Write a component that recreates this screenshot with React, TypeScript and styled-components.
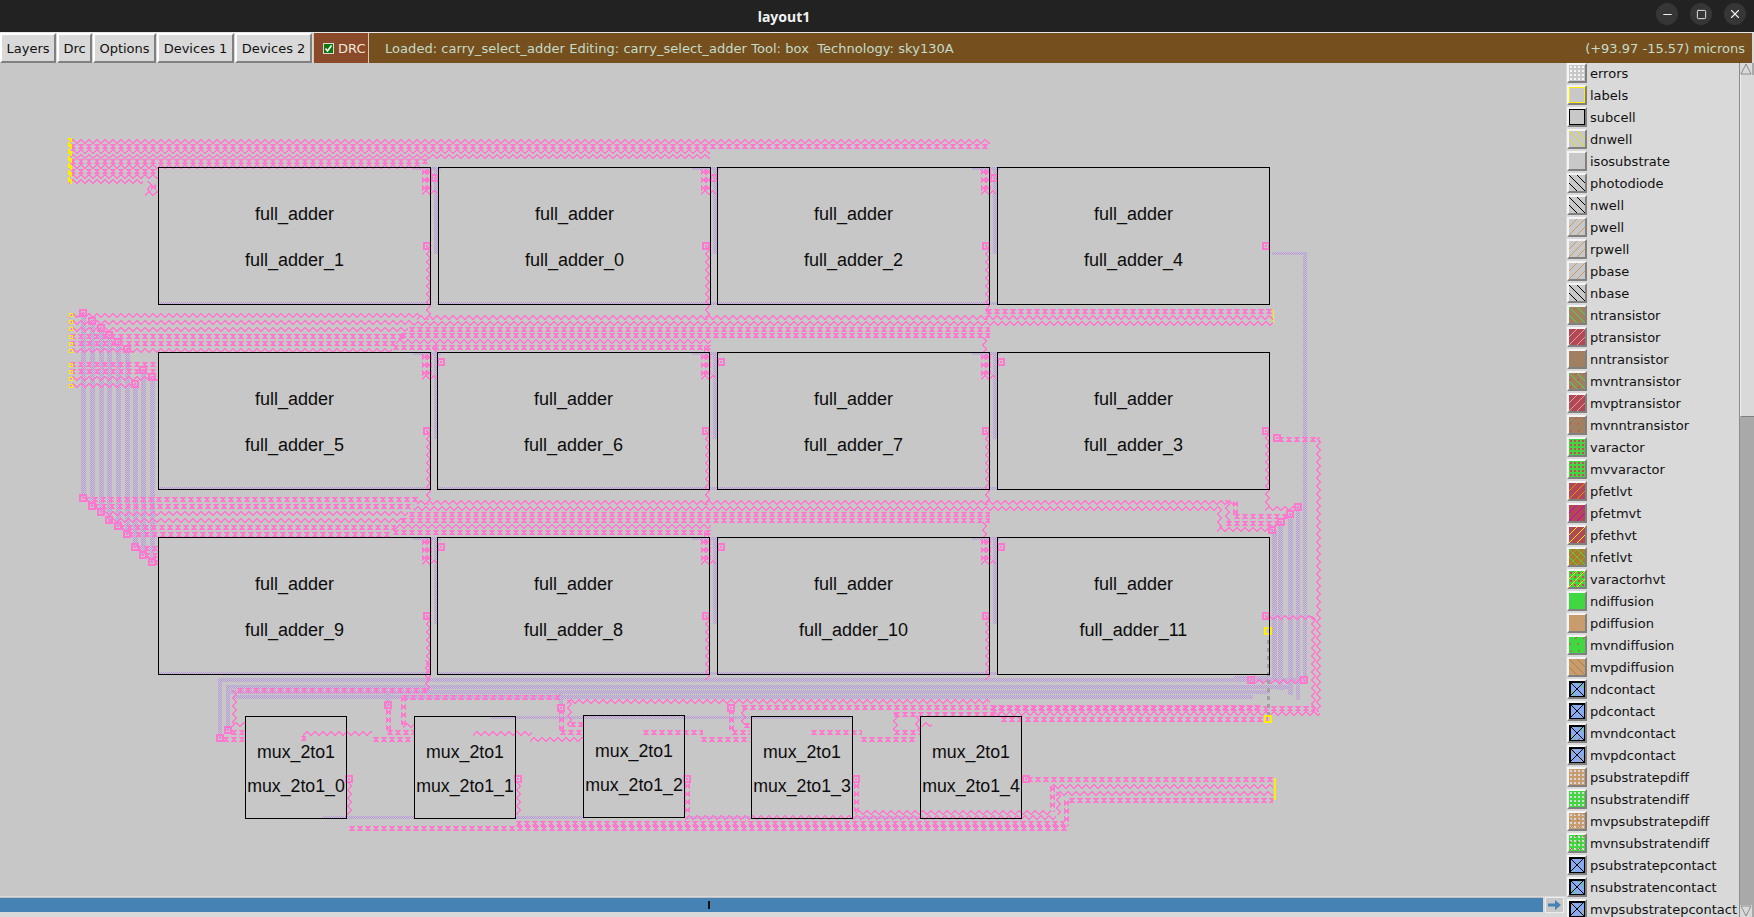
import React from "react";
import styled, { createGlobalStyle } from "styled-components";
import { Minus, Square, X } from "lucide-react";

const PINK = "#ff78cf";
const LILAC = "#b998dc";

const GlobalStyle = createGlobalStyle`
  html, body {
    margin: 0;
    padding: 0;
    height: 100%;
    overflow: hidden;
    background: #d9d9d9;
  }
  #root {
    height: 100%;
  }
`;

const Window = styled.div`
  display: flex;
  flex-direction: column;
  width: 1754px;
  height: 917px;
  font-family: "DejaVu Sans", sans-serif;
  font-size: 13px;
  overflow: hidden;
`;

const TitleBar = styled.div`
  position: relative;
  flex: 0 0 32px;
  display: flex;
  align-items: center;
  justify-content: center;
  padding-right: 186px;
  background: #222222;
  border-bottom: 1px solid #e8e8e8;
`;

const Title = styled.span`
  font-family: "Noto Sans", sans-serif;
  font-weight: 700;
  font-size: 14px;
  color: #f2f2f2;
`;

const WindowButtons = styled.div`
  position: absolute;
  right: 8px;
  top: 3px;
  display: flex;
  gap: 12px;
`;

const WindowButton = styled.div`
  width: 22px;
  height: 22px;
  border-radius: 50%;
  background: #363636;
  color: #f0f0f0;
  display: flex;
  align-items: center;
  justify-content: center;
`;

const Toolbar = styled.div`
  flex: 0 0 30px;
  display: flex;
  align-items: stretch;
  padding-right: 2px;
  background: #d9d9d9;
`;

const ToolButton = styled.div<{ $w: number }>`
  box-sizing: border-box;
  width: ${(p) => p.$w}px;
  margin-right: 1px;
  display: flex;
  align-items: center;
  justify-content: center;
  background: #d9d9d9;
  color: #111;
  border: 2px solid;
  border-color: #ffffff #808080 #808080 #ffffff;
`;

const DrcToggle = styled.div`
  box-sizing: border-box;
  width: 56px;
  display: flex;
  align-items: center;
  gap: 4px;
  padding-left: 9px;
  background: #8a4a2a;
  color: #f2e8dc;
  border: 1px solid #d9c8b8;
  border-width: 0 1px 0 1px;
`;

const CheckMark = styled.div`
  box-sizing: border-box;
  width: 11px;
  height: 11px;
  display: flex;
  background: #0b7a0b;
  border: 1px solid #d9d9d9;
`;

const StatusBar = styled.div`
  flex: 1;
  display: flex;
  align-items: center;
  justify-content: space-between;
  padding: 0 7px 0 16px;
  background: #75501e;
  color: #c4dccb;
  white-space: pre;
`;

const LoadedText = styled.span`
  letter-spacing: 0.05px;
`;

const Body = styled.div`
  flex: 1;
  min-height: 0;
  display: flex;
`;

const Main = styled.div`
  flex: 0 0 1566px;
  display: flex;
  flex-direction: column;
`;

const Canvas = styled.div`
  position: relative;
  flex: 1;
  background: #c7c7c7;
  overflow: hidden;
`;

const WireLayer = styled.svg`
  position: absolute;
  left: 0;
  top: 0;
`;

const Cell = styled.div<{ $x: number; $y: number; $w: number; $h: number; $gap: number; $size: number }>`
  position: absolute;
  box-sizing: border-box;
  left: ${(p) => p.$x}px;
  top: ${(p) => p.$y - 63}px;
  width: ${(p) => p.$w}px;
  height: ${(p) => p.$h}px;
  padding-top: 2px;
  border: 1.5px solid #000;
  display: flex;
  flex-direction: column;
  align-items: center;
  justify-content: center;
  gap: ${(p) => p.$gap}px;
  font-family: "Liberation Sans", Arial, sans-serif;
  font-size: ${(p) => p.$size}px;
  line-height: 20px;
  color: #0c0c0c;
`;

const HScroll = styled.div`
  flex: 0 0 20px;
  display: flex;
  align-items: flex-start;
  gap: 2px;
  padding-top: 1px;
  background: #d9d9d9;
`;

const HTrough = styled.div`
  position: relative;
  flex: 1;
  height: 14px;
  background: #4682b4;
  border-top: 1px solid #c0c0c0;
`;

const HTick = styled.div`
  position: absolute;
  left: 708px;
  top: 3px;
  width: 2px;
  height: 8px;
  background: #111;
`;

const HArrow = styled.div`
  box-sizing: border-box;
  width: 19px;
  height: 16px;
  margin-right: 2px;
  display: flex;
  align-items: center;
  justify-content: center;
  background: #c8c8c8;
  border: 1px solid #eee;
`;

const Legend = styled.div`
  flex: 1;
  display: flex;
  min-width: 0;
`;

const LegendList = styled.div`
  flex: 0 0 173px;
  overflow: hidden;
  background: #d9d9d9;
  border-right: 1px solid #8c8c8c;
`;

const LegendRow = styled.div`
  height: 22px;
  display: flex;
  align-items: center;
  gap: 3px;
  padding-left: 1px;
  color: #111;
  white-space: nowrap;
  position: relative;
  top: -1px;
`;

const Swatch = styled.div`
  box-sizing: border-box;
  flex: 0 0 20px;
  height: 20px;
  border: 2px solid;
  border-color: #f4f4f4 #808080 #808080 #f4f4f4;
  display: flex;
`;

const VScroll = styled.div`
  flex: 0 0 14px;
  display: flex;
  flex-direction: column;
  background: #a9a9a9;
  border-right: 2px solid #d9d9d9;
`;

const ScrollThumb = styled.div`
  box-sizing: border-box;
  height: 342px;
  background: #d9d9d9;
  border-bottom: 1px solid #808080;
  border-left: 1px solid #eee;
`;

const ScrollArrow = styled.svg`
  display: block;
  flex: 0 0 12px;
  background: #d9d9d9;
`;

const ScrollGap = styled.div`
  flex: 1;
`;

// wires: kind, x1, y1, x2, y2 (horizontal when y1 == y2)
type Wire = ["w" | "b", number, number, number, number];

const wires: Wire[] = [
  // top band
  ["w", 69, 139, 990, 139], ["b", 69, 144, 990, 144], ["w", 69, 149, 710, 149], ["w", 69, 154, 710, 154],
  ["b", 69, 159, 428, 159], ["w", 69, 164, 422, 164], ["b", 69, 169, 158, 169], ["w", 69, 174, 158, 174],
  ["w", 69, 179, 143, 179], ["w", 147, 181, 147, 192], ["w", 145, 191, 158, 191], ["b", 151, 183, 151, 190],
  // second band, left part
  ["w", 69, 313, 420, 313], ["w", 69, 320, 414, 320], ["w", 69, 327, 408, 327], ["b", 69, 334, 404, 334],
  ["b", 69, 341, 396, 341], ["w", 69, 348, 392, 348],
  // second band, right part
  ["b", 985, 309, 1273, 309], ["w", 417, 315, 1273, 315], ["w", 414, 321, 1273, 321],
  ["b", 408, 327, 990, 327], ["b", 400, 333, 990, 333], ["w", 396, 339, 711, 339], ["b", 392, 345, 711, 345],
  ["w", 982, 337, 982, 352], ["b", 704, 345, 704, 352], ["w", 432, 340, 432, 352],
  // left stubs into row 2
  ["b", 69, 362, 158, 362], ["b", 69, 369, 158, 369], ["w", 69, 376, 158, 376], ["w", 69, 383, 135, 383],
  // third band, left part
  ["b", 83, 497, 420, 497], ["b", 92, 504, 414, 504], ["w", 101, 511, 408, 511], ["w", 109, 518, 404, 518],
  ["b", 118, 525, 396, 525], ["b", 127, 532, 392, 532],
  // third band, right part
  ["w", 417, 500, 1233, 500], ["w", 414, 506, 1217, 506], ["b", 408, 512, 990, 512], ["b", 400, 518, 990, 518],
  ["w", 396, 524, 711, 524], ["b", 392, 530, 711, 530], ["b", 704, 530, 704, 537], ["w", 982, 522, 982, 537],
  // left stubs into row 3
  ["b", 135, 546, 158, 546], ["b", 143, 553, 158, 553], ["b", 152, 560, 158, 560],
  // right hand side routing
  ["b", 1233, 500, 1233, 515], ["w", 1217, 506, 1217, 528], ["w", 1225, 500, 1225, 522],
  ["b", 1233, 514, 1290, 514], ["b", 1225, 521, 1281, 521], ["w", 1217, 527, 1272, 527],
  ["w", 1265, 430, 1265, 507], ["w", 1265, 506, 1298, 506], ["b", 1277, 437, 1320, 437], ["w", 1316, 438, 1316, 712],
  ["w", 1265, 615, 1315, 615], ["w", 1311, 616, 1311, 712], ["w", 1255, 679, 1304, 679],
  ["b", 990, 706, 1315, 706], ["w", 990, 711, 1320, 711], ["b", 1000, 717, 1268, 717],
  // bottom, left entry
  ["b", 236, 688, 427, 688], ["w", 232, 690, 232, 724], ["w", 232, 722, 245, 722], ["b", 230, 730, 245, 730],
  ["b", 222, 737, 245, 737], ["w", 425, 660, 425, 692],
  // mux 0 to 1
  ["w", 303, 731, 372, 731], ["b", 300, 736, 306, 736], ["b", 372, 737, 414, 737], ["b", 386, 708, 386, 730],
  ["b", 401, 695, 401, 725], ["b", 401, 695, 562, 695], ["w", 403, 723, 414, 723], ["b", 386, 730, 414, 730],
  // mux 1 to 2
  ["w", 473, 731, 532, 731], ["w", 530, 737, 583, 737], ["b", 559, 708, 559, 730], ["w", 567, 700, 567, 727],
  ["w", 567, 699, 990, 699], ["b", 559, 730, 583, 730], ["b", 569, 722, 583, 722],
  // mux 2 to 3
  ["b", 642, 730, 703, 730], ["b", 700, 737, 750, 737], ["b", 729, 708, 729, 730], ["w", 741, 705, 741, 725],
  ["b", 741, 705, 1260, 705], ["b", 731, 730, 750, 730], ["b", 743, 723, 750, 723],
  // mux 3 to 4
  ["b", 810, 730, 862, 730], ["b", 860, 737, 917, 737], ["w", 893, 713, 893, 730], ["b", 893, 712, 1000, 712],
  ["b", 893, 730, 920, 730], ["b", 1000, 717, 1265, 717], ["w", 915, 716, 915, 730], ["w", 922, 722, 932, 722],
  // mux outputs and bottom rails
  ["w", 347, 782, 347, 815], ["w", 516, 782, 516, 815], ["b", 685, 782, 685, 815], ["b", 854, 782, 854, 812],
  ["w", 855, 810, 1050, 810], ["w", 685, 815, 1056, 815], ["b", 515, 821, 1064, 821], ["b", 348, 826, 1068, 826],
  // mux 4 output
  ["b", 1026, 777, 1273, 777], ["w", 1050, 784, 1273, 784], ["w", 1056, 791, 1273, 791], ["b", 1068, 798, 1273, 798],
  ["b", 1050, 785, 1050, 812], ["w", 1056, 792, 1056, 815], ["b", 1064, 799, 1064, 826],
];

// cell corners repeat on every row
[0, 185, 370].forEach((dy, row) => {
  [431, 710, 990].forEach((r) => {
    wires.push(["b", r - 9, 168 + dy, r - 9, 193 + dy]);
    wires.push(["b", r - 4, 168 + dy, r - 4, 190 + dy]);
    wires.push(["w", r - 9, 190 + dy, r + 6, 190 + dy]);
    wires.push(["w", r - 5, 246 + dy, r - 5, row === 2 ? 680 : 320 + dy]);
  });
});

const lilac: [number, number, number, number][] = [
  // stair verticals
  [81, 313, 5, 185], [90, 320, 5, 186], [99, 328, 5, 184], [107, 335, 5, 185], [116, 342, 5, 184], [125, 349, 5, 185],
  [133, 384, 5, 163], [141, 370, 5, 185], [150, 377, 5, 185],
  // bottom rails
  [218, 678, 1082, 4], [226, 685, 1062, 4], [230, 690, 1040, 4], [233, 695, 1020, 4], [218, 678, 4, 60], [226, 685, 4, 45],
  [386, 692, 4, 14], [559, 694, 4, 12], [490, 716, 360, 3],
  // right hand verticals
  [1303, 252, 4, 430], [1272, 252, 34, 3], [1296, 506, 4, 194], [1288, 514, 5, 181], [1278, 522, 5, 168],
  [1272, 530, 5, 150], [1234, 676, 36, 3],
  // mux bottoms
  [322, 816, 92, 3], [514, 816, 70, 3], [685, 816, 65, 3], [852, 816, 68, 3],
];

[0, 185, 370].forEach((dy) => {
  [431, 710, 990].forEach((r, i) => {
    lilac.push([r - 18, 167 + dy, 28, 3]);
    lilac.push([r + 3, 170 + dy, 4, 84]);
    lilac.push([(i === 0 ? 158 : r - 273), 302 + dy, i === 0 ? 273 : 280, 3]);
  });
});

const contacts: [number, number][] = [
  [83, 313], [92, 321], [101, 328], [109, 335], [118, 342], [127, 349], [143, 370], [152, 377], [135, 384],
  [83, 498], [92, 506], [101, 512], [109, 520], [118, 526], [127, 534], [135, 547], [143, 555], [152, 562],
  [441, 362], [721, 362], [1001, 362], [441, 547], [721, 547], [1001, 547],
  [435, 178], [714, 178], [994, 178], [220, 738], [228, 730], [388, 705], [561, 708], [731, 708],
  [1277, 438], [1298, 507], [1290, 514], [1281, 522], [1272, 530], [1304, 680], [1251, 680],
  [427, 246], [706, 246], [986, 246], [1266, 246], [427, 431], [706, 431], [986, 431], [1266, 431],
  [427, 616], [706, 616], [986, 616], [1266, 616], [349, 779], [518, 779], [687, 779], [856, 779], [1026, 779],
];

const pads: [number, number][] = [
  [70, 313], [70, 320], [70, 327], [70, 335], [70, 342], [70, 349], [70, 363], [70, 370], [70, 377], [70, 384],
];

const drawWire = ([k, x1, y1, x2, y2]: Wire, i: number) => {
  const horizontal = y1 === y2;
  const len = horizontal ? x2 - x1 : y2 - y1;
  const tf = horizontal ? `translate(${x1} ${y1 - 63})` : `translate(${x1 + 5} ${y1 - 63}) rotate(90)`;
  return <rect key={i} width={len} height={5} fill={k === "w" ? "url(#wave)" : "url(#bow)"} transform={tf} />;
};

const Wires: React.FC = () => (
  <WireLayer width={1566} height={834} shapeRendering="crispEdges">
    <defs>
      <pattern id="wave" width="8" height="5" patternUnits="userSpaceOnUse">
        <path
          fill={PINK}
          d="M3 0h2v1h-2zM2 1h4v1h-4zM1 2h2v1h-2zM5 2h2v1h-2zM0 3h2v1h-2zM6 3h2v1h-2zM0 4h1v1h-1zM7 4h1v1h-1z"
        />
      </pattern>
      <pattern id="bow" width="8" height="5" patternUnits="userSpaceOnUse">
        <path fill={PINK} d="M1 0h6v1h-6zM2 1h4v1h-4zM3 2h2v1h-2zM2 3h4v1h-4zM1 4h6v1h-6z" />
      </pattern>
      <pattern id="poly" width="2" height="2" patternUnits="userSpaceOnUse">
        <rect width="1" height="1" fill={LILAC} />
        <rect x="1" y="1" width="1" height="1" fill={LILAC} />
      </pattern>
    </defs>
    {lilac.map(([x, y, w, h], i) => (
      <rect key={i} x={x} y={y - 63} width={w} height={h} fill="url(#poly)" />
    ))}
    {wires.map(drawWire)}
    {contacts.map(([x, y], i) => (
      <g key={i}>
        <rect x={x - 3} y={y - 66} width={6} height={6} fill="none" stroke={PINK} strokeWidth={2} />
        <rect x={x - 1} y={y - 64} width={2} height={2} fill={PINK} />
      </g>
    ))}
    {pads.map(([x, y], i) => (
      <rect key={i} x={x - 1} y={y - 63} width={3} height={3} fill="none" stroke="#ffee00" strokeWidth={1} />
    ))}
    <rect x={69} y={76} width={2} height={44} fill="none" stroke="#ffee00" strokeWidth={2} strokeDasharray="5 2" />
    <rect x={1273} y={246} width={1} height={14} fill="#ffee00" />
    <rect x={1274} y={715} width={2} height={22} fill="#ffee00" />
    <line x1={1268} y1={577} x2={1268} y2={653} stroke="#a0a0a0" strokeWidth={3} strokeDasharray="4 4" />
    <rect x={1265} y={628 - 63} width={6} height={6} fill="none" stroke="#ffee00" strokeWidth={2} />
    <rect x={1265} y={716 - 63} width={6} height={6} fill="none" stroke="#ffee00" strokeWidth={2} />
  </WireLayer>
);

const adders: [string, number, number][] = [
  ["full_adder_1", 158, 167], ["full_adder_0", 438, 167], ["full_adder_2", 717, 167], ["full_adder_4", 997, 167],
  ["full_adder_5", 158, 352], ["full_adder_6", 437, 352], ["full_adder_7", 717, 352], ["full_adder_3", 997, 352],
  ["full_adder_9", 158, 537], ["full_adder_8", 437, 537], ["full_adder_10", 717, 537], ["full_adder_11", 997, 537],
];

const muxes: [string, number, number][] = [
  ["mux_2to1_0", 245, 716], ["mux_2to1_1", 414, 716], ["mux_2to1_2", 583, 715], ["mux_2to1_3", 751, 716], ["mux_2to1_4", 920, 716],
];

type Layer = {
  name: string;
  bg?: string;
  down?: string;
  up?: string;
  short?: string;
  dots?: string;
  grid?: string;
  box?: string;
  contact?: boolean;
};

const GREY = "#c8c8c8";
const BROWN = "#a08060";
const RED = "#b04858";
const GREEN = "#40d840";
const TAN = "#c89c6c";
const BLUE = "#88aaee";

const layers: Layer[] = [
  { name: "errors", bg: GREY, grid: "#f4f4f4" },
  { name: "labels", bg: GREY, box: "#ffee00" },
  { name: "subcell", bg: GREY, box: "#000" },
  { name: "dnwell", bg: GREY, down: "#e8e000" },
  { name: "isosubstrate", bg: GREY },
  { name: "photodiode", bg: GREY, down: "#000" },
  { name: "nwell", bg: GREY, down: "#000" },
  { name: "pwell", bg: GREY, up: "#cc9966" },
  { name: "rpwell", bg: GREY, up: "#cc9966" },
  { name: "pbase", bg: GREY, up: "#cc9966" },
  { name: "nbase", bg: GREY, down: "#000" },
  { name: "ntransistor", bg: BROWN, down: "#44dd44" },
  { name: "ptransistor", bg: RED, up: "#e8a090" },
  { name: "nntransistor", bg: BROWN },
  { name: "mvntransistor", bg: BROWN, down: "#44dd44", short: "#d04040" },
  { name: "mvptransistor", bg: RED, up: "#e8a090" },
  { name: "mvnntransistor", bg: BROWN, short: "#c84848" },
  { name: "varactor", bg: GREEN, dots: "#d04858" },
  { name: "mvvaractor", bg: GREEN, dots: "#d04858" },
  { name: "pfetlvt", bg: RED, up: "#e89000" },
  { name: "pfetmvt", bg: RED, up: "#d000c0" },
  { name: "pfethvt", bg: RED, up: "#ffee00" },
  { name: "nfetlvt", bg: "#a08030", down: "#44dd44", up: "#d08a20" },
  { name: "varactorhvt", bg: GREEN, dots: "#d04858", up: "#ffee00" },
  { name: "ndiffusion", bg: GREEN },
  { name: "pdiffusion", bg: TAN },
  { name: "mvndiffusion", bg: GREEN, short: "#e04040" },
  { name: "mvpdiffusion", bg: TAN, down: "#a88050" },
  { name: "ndcontact", bg: BLUE, box: "#000", contact: true, down: "#44dd44" },
  { name: "pdcontact", bg: BLUE, box: "#000", contact: true },
  { name: "mvndcontact", bg: BLUE, box: "#000", contact: true, down: "#44dd44", short: "#d04040" },
  { name: "mvpdcontact", bg: BLUE, box: "#000", contact: true, up: "#c89c6c" },
  { name: "psubstratepdiff", bg: TAN, grid: "#d8d8d8" },
  { name: "nsubstratendiff", bg: GREEN, grid: "#d8d8d8" },
  { name: "mvpsubstratepdiff", bg: TAN, grid: "#d8d8d8", short: "#a88050" },
  { name: "mvnsubstratendiff", bg: GREEN, grid: "#d8d8d8", short: "#e04040" },
  { name: "psubstratepcontact", bg: BLUE, box: "#000", contact: true },
  { name: "nsubstratencontact", bg: BLUE, box: "#000", contact: true, down: "#44dd44" },
  { name: "mvpsubstratepcontact", bg: BLUE, box: "#000", contact: true, up: "#c89c6c" },
];

const OFFSETS = [-16, -8, 0, 8, 16];
const DOTS = [2, 6, 10, 14];

const LayerIcon: React.FC<{ layer: Layer }> = ({ layer }) => (
  <svg width={16} height={16} shapeRendering="crispEdges">
    <rect width={16} height={16} fill={layer.bg} />
    {layer.grid &&
      DOTS.map((x) => DOTS.map((y) => <rect key={`${x}-${y}`} x={x - 1} y={y - 1} width={2} height={2} fill={layer.grid} />))}
    {layer.dots &&
      DOTS.map((x) => DOTS.map((y) => <rect key={`${x}-${y}`} x={x - 1} y={y - 1} width={2} height={2} fill={layer.dots} />))}
    {layer.down && OFFSETS.map((o) => <line key={o} x1={o} y1={0} x2={o + 16} y2={16} stroke={layer.down} />)}
    {layer.up && OFFSETS.map((o) => <line key={o} x1={o + 16} y1={0} x2={o} y2={16} stroke={layer.up} />)}
    {layer.short &&
      OFFSETS.map((o) => <line key={o} x1={o + 16} y1={0} x2={o} y2={16} stroke={layer.short} strokeDasharray="3 6" />)}
    {layer.contact && (
      <>
        <line x1={0} y1={0} x2={16} y2={16} stroke="#000" />
        <line x1={16} y1={0} x2={0} y2={16} stroke="#000" />
      </>
    )}
    {layer.box && <rect x={0.5} y={0.5} width={15} height={15} fill="none" stroke={layer.box} strokeWidth={layer.contact ? 2 : 1} />}
  </svg>
);

export default function App() {
  return (
    <Window>
      <GlobalStyle />
      <TitleBar>
        <Title>layout1</Title>
        <WindowButtons>
          <WindowButton>
            <Minus size={13} strokeWidth={2} />
          </WindowButton>
          <WindowButton>
            <Square size={11} strokeWidth={2} />
          </WindowButton>
          <WindowButton>
            <X size={14} strokeWidth={2} />
          </WindowButton>
        </WindowButtons>
      </TitleBar>
      <Toolbar>
        <ToolButton $w={56}>Layers</ToolButton>
        <ToolButton $w={35}>Drc</ToolButton>
        <ToolButton $w={63}>Options</ToolButton>
        <ToolButton $w={77}>Devices 1</ToolButton>
        <ToolButton $w={77}>Devices 2</ToolButton>
        <DrcToggle>
          <CheckMark>
            <svg width={9} height={9} viewBox="0 0 9 9">
              <path d="M1.5 4.5 L3.5 7 L7.5 1.5" fill="none" stroke="#fff" strokeWidth={1.6} />
            </svg>
          </CheckMark>
          DRC
        </DrcToggle>
        <StatusBar>
          <LoadedText>Loaded: carry_select_adder Editing: carry_select_adder Tool: box  Technology: sky130A</LoadedText>
          <span>(+93.97 -15.57) microns</span>
        </StatusBar>
      </Toolbar>
      <Body>
        <Main>
          <Canvas>
            <Wires />
            {adders.map(([name, x, y]) => (
              <Cell key={name} $x={x} $y={y} $w={273} $h={138} $gap={26} $size={18}>
                <span>full_adder</span>
                <span>{name}</span>
              </Cell>
            ))}
            {muxes.map(([name, x, y]) => (
              <Cell key={name} $x={x} $y={y} $w={102} $h={103} $gap={14} $size={17.75}>
                <span>mux_2to1</span>
                <span>{name}</span>
              </Cell>
            ))}
          </Canvas>
          <HScroll>
            <HTrough>
              <HTick />
            </HTrough>
            <HArrow>
              <svg width={15} height={12} viewBox="0 0 15 12">
                <path d="M1 4.5h7V1l6 5-6 5V7.5H1z" fill="#4682b4" />
              </svg>
            </HArrow>
          </HScroll>
        </Main>
        <Legend>
          <LegendList>
            {layers.map((layer) => (
              <LegendRow key={layer.name}>
                <Swatch>
                  <LayerIcon layer={layer} />
                </Swatch>
                {layer.name}
              </LegendRow>
            ))}
          </LegendList>
          <VScroll>
            <ScrollArrow width={12} height={12} viewBox="0 0 12 12">
              <path d="M6 1 L11 11 H1 Z" fill="#d9d9d9" stroke="#8c8c8c" />
            </ScrollArrow>
            <ScrollThumb />
            <ScrollGap />
            <ScrollArrow width={12} height={12} viewBox="0 0 12 12">
              <path d="M1 1 H11 L6 11 Z" fill="#d9d9d9" stroke="#8c8c8c" />
            </ScrollArrow>
          </VScroll>
        </Legend>
      </Body>
    </Window>
  );
}
